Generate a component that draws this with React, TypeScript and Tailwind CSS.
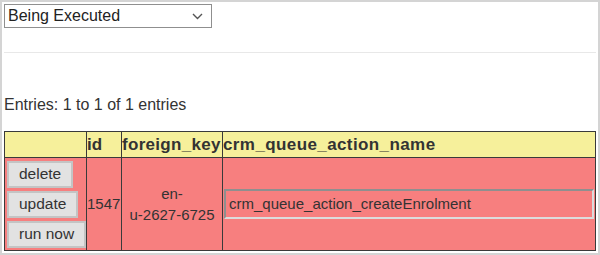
import React from "react";

export default function App() {
  const font = { fontFamily: '"Liberation Sans", Arial, sans-serif' };
  return (
    <div
      className="w-[600px] h-[255px] box-border border-2 border-[#d4d4d4] bg-white pt-[2px] pl-[2px] pr-[1px] overflow-hidden text-[#333]"
      style={font}
    >
      <div className="flex items-center justify-between w-[208px] h-[24px] border border-[#8f8f8f] bg-white pl-[3px] pr-[8px] box-border">
        <span className="text-[16px] leading-none text-[#222]">Being Executed</span>
        <svg width="11" height="7" viewBox="0 0 11 7" fill="none">
          <path d="M1 1l4.5 4.5L10 1" stroke="#555" strokeWidth="1.4" />
        </svg>
      </div>
      <div className="h-[24px]" />
      <div className="h-[1px] bg-[#e8e8e8] mr-[1px]" />
      <div className="h-[43px]" />
      <div className="text-[16px] leading-[18px] h-[18px] text-[#333]">Entries: 1 to 1 of 1 entries</div>
      <div className="h-[17px]" />
      <table className="border-collapse w-[592px] table-fixed">
        <colgroup>
          <col className="w-[82px]" />
          <col className="w-[35px]" />
          <col className="w-[101px]" />
          <col />
        </colgroup>
        <thead>
          <tr className="bg-[#f6f09b] h-[26px]">
            <th className="border border-[#3a3a3a] p-0"></th>
            <th className="border border-[#3a3a3a] p-0 text-left text-[17px] font-bold leading-none whitespace-nowrap">id</th>
            <th className="border border-[#3a3a3a] p-0 text-left text-[17px] font-bold leading-none whitespace-nowrap tracking-[0.3px]">foreign_key</th>
            <th className="border border-[#3a3a3a] p-0 text-left text-[17px] font-bold leading-none whitespace-nowrap tracking-[0.4px]">crm_queue_action_name</th>
          </tr>
        </thead>
        <tbody>
          <tr className="bg-[#f77f7f] h-[93px]">
            <td className="border border-[#3a3a3a] p-0 pl-[2px] align-middle">
              <div className="flex flex-col items-start gap-[3px]">
                <button className="h-[27px] px-[10px] border-2 border-[#c4c4c4] bg-[#e2e2e2] text-[15.5px] leading-none text-[#333] whitespace-nowrap">delete</button>
                <button className="h-[27px] px-[10px] border-2 border-[#c4c4c4] bg-[#e2e2e2] text-[15.5px] leading-none text-[#333] whitespace-nowrap">update</button>
                <button className="h-[27px] px-[10px] border-2 border-[#c4c4c4] bg-[#e2e2e2] text-[15.5px] leading-none text-[#333] whitespace-nowrap">run now</button>
              </div>
            </td>
            <td className="border border-[#3a3a3a] p-0 text-[15px] align-middle whitespace-nowrap">1547</td>
            <td className="border border-[#3a3a3a] p-0 text-[15px] leading-[21px] text-center align-middle">
              en-
              <br />
              u-2627-6725
            </td>
            <td className="border border-[#3a3a3a] p-0 px-[1px] align-middle">
              <div className="h-[30px] border-2 border-t-[#8f8f8f] border-l-[#8f8f8f] border-b-[#dcdcdc] border-r-[#dcdcdc] flex items-center pl-[3px] text-[15px] text-[#333]">
                crm_queue_action_createEnrolment
              </div>
            </td>
          </tr>
        </tbody>
      </table>
    </div>
  );
}
